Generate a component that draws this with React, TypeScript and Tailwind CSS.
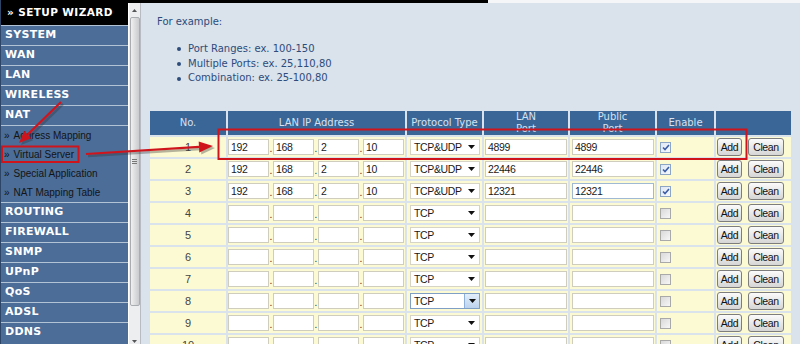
import React from "react";

const dv = "font-['DejaVu_Sans',Verdana,sans-serif]";
const lib = "font-['Liberation_Sans',Arial,sans-serif]";
const narrow = "font-['Liberation_Sans',Arial,sans-serif] text-[10.5px] tracking-[-0.35px]";

type Row = {
  n: number;
  ip: string[];
  proto: string;
  lan: string;
  pub: string;
  en: boolean;
};

const rows: Row[] = [
  { n: 1, ip: ["192", "168", "2", "10"], proto: "TCP&UDP", lan: "4899", pub: "4899", en: true },
  { n: 2, ip: ["192", "168", "2", "10"], proto: "TCP&UDP", lan: "22446", pub: "22446", en: true },
  { n: 3, ip: ["192", "168", "2", "10"], proto: "TCP&UDP", lan: "12321", pub: "12321", en: true },
  ...[4, 5, 6, 7, 8, 9, 10].map((n) => ({ n, ip: ["", "", "", ""], proto: "TCP", lan: "", pub: "", en: false })),
];

const mainItems1 = ["SYSTEM", "WAN", "LAN", "WIRELESS", "NAT"];
const subItems = ["Address Mapping", "Virtual Server", "Special Application", "NAT Mapping Table"];
const mainItems2 = ["ROUTING", "FIREWALL", "SNMP", "UPnP", "QoS", "ADSL", "DDNS"];

function SideItem({ label }: { label: string }) {
  return (
    <div className={`h-[20px] shrink-0 border-t border-[#b3c3d6] flex items-center pl-[4px] text-white font-bold text-[11px] tracking-[0.3px] ${dv}`}>
      {label}
    </div>
  );
}

function Field({ value, w, blue }: { value: string; w: string; blue?: boolean }) {
  return (
    <div
      className={`h-[16px] ${w} bg-white border ${blue ? "border-[#9fb8d4]" : "border-[#cfcdbd]"} flex items-center pl-[2px] leading-none text-[#1a1a1a] ${narrow}`}
    >
      {value}
    </div>
  );
}

function Tri() {
  return (
    <svg width="7" height="4" viewBox="0 0 7 4">
      <polygon points="0,0 7,0 3.5,4" fill="#111" />
    </svg>
  );
}

function Select({ value, active }: { value: string; active?: boolean }) {
  return (
    <div
      className={`ml-[3px] h-[16px] w-[70px] bg-white border ${active ? "border-[#7f9fc6]" : "border-[#d6d4c6]"} flex items-center leading-none text-[#1a1a1a] ${narrow}`}
    >
      <span className="pl-[3px] flex-1">{value}</span>
      {active ? (
        <span className="h-full w-[15px] flex items-center justify-center bg-gradient-to-b from-[#e3eefa] to-[#bcd3ee] border-l border-[#8fb0d8]">
          <Tri />
        </span>
      ) : (
        <span className="w-[15px] flex items-center justify-center">
          <Tri />
        </span>
      )}
    </div>
  );
}

function Check({ on }: { on: boolean }) {
  return on ? (
    <div className="ml-[3px] w-[11px] h-[11px] border border-[#8da6c6] bg-gradient-to-br from-[#dfe7f3] to-[#f6f9fd] flex items-center justify-center">
      <svg width="8" height="7" viewBox="0 0 8 7">
        <path d="M1 3.5 L3 5.5 L7 1" stroke="#3b5da6" strokeWidth="1.6" fill="none" />
      </svg>
    </div>
  ) : (
    <div className="ml-[3px] w-[11px] h-[11px] border border-[#a9a9a9] bg-gradient-to-br from-[#d9d9d9] to-[#f7f7f7]" />
  );
}

function Btn({ label, w }: { label: string; w: string }) {
  return (
    <div
      className={`h-[18px] ${w} rounded-[3px] border border-[#7d7d7d] bg-gradient-to-b from-[#fbfbfb] to-[#d6d6d6] flex items-center justify-center leading-none text-[#111] ${narrow}`}
    >
      {label}
    </div>
  );
}

export default function App() {
  const cell = "bg-[#fcfad2] h-[20px] flex items-center";
  const head = `bg-[#3a6597] h-[24px] flex items-center justify-center text-center text-[10px] leading-[12px] text-[#d6e2ef] ${dv}`;
  return (
    <div className="relative w-[800px] h-[344px] overflow-hidden flex bg-[#dae2eb]">
      {/* Sidebar */}
      <aside className="w-[128px] shrink-0 h-full flex flex-col bg-[#4b6d98] border-l border-[#2d4566]">
        <div className={`h-[25px] shrink-0 bg-black flex items-center pl-[6px] text-white font-bold text-[10.5px] tracking-[0.4px] ${dv}`}>
          <span className="mr-[4px]">»</span>SETUP WIZARD
        </div>
        {mainItems1.map((l) => (
          <SideItem key={l} label={l} />
        ))}
        <div className="h-[77px] shrink-0 border-t border-[#b3c3d6] flex flex-col">
          {subItems.map((s) => (
            <div key={s} className={`flex-1 flex items-center pl-[3px] text-[10px] text-[#141414] ${lib}`}>
              <span className="mr-[4px]">»</span>
              {s}
            </div>
          ))}
        </div>
        {mainItems2.map((l) => (
          <SideItem key={l} label={l} />
        ))}
      </aside>

      {/* Right part */}
      <div className="flex-1 flex flex-col h-full">
        <div className="h-[3px] shrink-0 flex">
          <div className="w-[360px] bg-black" />
          <div className="flex-1 bg-[#f4f6f8]" />
        </div>
        <div className="flex-1 flex min-h-0">
          {/* Scrollbar */}
          <div className="w-[13px] shrink-0 h-full bg-[#eceef0] border-l border-white border-r border-r-[#b8bcc2] flex flex-col items-center">
            <div className="h-[14px] w-full flex items-center justify-center">
              <svg width="5" height="3" viewBox="0 0 5 3">
                <polygon points="0,3 5,3 2.5,0" fill="#555" />
              </svg>
            </div>
            <div className="h-[289px] w-[10px] rounded-[2px] border border-[#a9adb2] bg-gradient-to-r from-[#f0f0f0] to-[#c9cbce] flex items-center justify-center">
              <div className="flex flex-col gap-[1px]">
                <div className="w-[5px] h-[1px] bg-[#777]" />
                <div className="w-[5px] h-[1px] bg-[#777]" />
                <div className="w-[5px] h-[1px] bg-[#777]" />
              </div>
            </div>
            <div className="flex-1" />
            <div className="h-[8px] w-full flex items-end justify-center pb-[1px]">
              <svg width="5" height="3" viewBox="0 0 5 3">
                <polygon points="0,0 5,0 2.5,3" fill="#555" />
              </svg>
            </div>
          </div>

          {/* Main */}
          <main className="flex-1 pl-[9px] flex flex-col">
            <div className={`h-[108px] shrink-0 text-[10px] text-[#2c4c7c] ${dv}`}>
              <div className="ml-[7px] mt-[12px] leading-[14px]">For example:</div>
              <ul className="mt-[13px] ml-[27px] leading-[14.7px]">
                <li className="flex items-center">
                  <span className="w-[4px] h-[4px] rounded-full bg-[#2c4c7c] mr-[7px]" />
                  Port Ranges: ex. 100-150
                </li>
                <li className="flex items-center">
                  <span className="w-[4px] h-[4px] rounded-full bg-[#2c4c7c] mr-[7px]" />
                  Multiple Ports: ex. 25,110,80
                </li>
                <li className="flex items-center">
                  <span className="w-[4px] h-[4px] rounded-full bg-[#2c4c7c] mr-[7px]" />
                  Combination: ex. 25-100,80
                </li>
              </ul>
            </div>

            <div className="w-[641px] grid grid-cols-[76px_177px_75px_84px_85px_57px_75px] gap-[2px]">
              <div className={head}>No.</div>
              <div className={head}>LAN IP Address</div>
              <div className={`${head} whitespace-nowrap overflow-hidden`}>Protocol Type</div>
              <div className={head}>
                LAN
                <br />
                Port
              </div>
              <div className={head}>
                Public
                <br />
                Port
              </div>
              <div className={head}>Enable</div>
              <div className={head} />

              {rows.map((r) => (
                <React.Fragment key={r.n}>
                  <div className={`${cell} justify-center text-[11px] text-[#444] ${lib}`}>{r.n}</div>
                  <div className={cell}>
                    {r.ip.map((v, i) => (
                      <React.Fragment key={i}>
                        {i > 0 && (
                          <span className={`w-[4px] h-[16px] flex items-end justify-center text-[10px] leading-[12px] text-[#333] ${lib}`}>.</span>
                        )}
                        <Field value={v} w="w-[41px]" />
                      </React.Fragment>
                    ))}
                  </div>
                  <div className={cell}>
                    <Select value={r.proto} active={r.n === 8} />
                  </div>
                  <div className={cell}>
                    <div className="ml-[1px]">
                      <Field value={r.lan} w="w-[82px]" />
                    </div>
                  </div>
                  <div className={cell}>
                    <div className="ml-[2px]">
                      <Field value={r.pub} w="w-[82px]" blue={r.n === 3} />
                    </div>
                  </div>
                  <div className={cell}>
                    <Check on={r.en} />
                  </div>
                  <div className={cell}>
                    <div className="ml-[1px] flex gap-[6px]">
                      <Btn label="Add" w="w-[25px]" />
                      <Btn label="Clean" w="w-[36px]" />
                    </div>
                  </div>
                </React.Fragment>
              ))}
            </div>
          </main>
        </div>
      </div>

      {/* Annotations */}
      <svg className="absolute inset-0 pointer-events-none" width="800" height="344" viewBox="0 0 800 344">
        <g opacity="0.35" transform="translate(2,2)">
          <line x1="61" y1="102" x2="27.6" y2="134.6" stroke="#333" strokeWidth="2.5" />
          <polygon points="19,143 31.1,138.2 24.1,131" fill="#333" />
          <line x1="86" y1="154" x2="199" y2="146.9" stroke="#333" strokeWidth="2.5" />
          <polygon points="213,146 199.3,152.4 198.7,141.4" fill="#333" />
        </g>
        <line x1="61" y1="102" x2="27.6" y2="134.6" stroke="#d0141c" strokeWidth="2.2" />
        <polygon points="19,143 31.1,138.2 24.1,131" fill="#d0141c" />
        <line x1="86" y1="154" x2="199" y2="146.9" stroke="#d0141c" strokeWidth="2.2" />
        <polygon points="213,146 199.3,152.4 198.7,141.4" fill="#d0141c" />
        <rect x="2" y="146.5" width="76.5" height="15.5" fill="none" stroke="#d0141c" strokeWidth="2" />
        <rect x="218.5" y="129.5" width="528" height="29.5" fill="none" stroke="#d0141c" strokeWidth="2" />
      </svg>
    </div>
  );
}
